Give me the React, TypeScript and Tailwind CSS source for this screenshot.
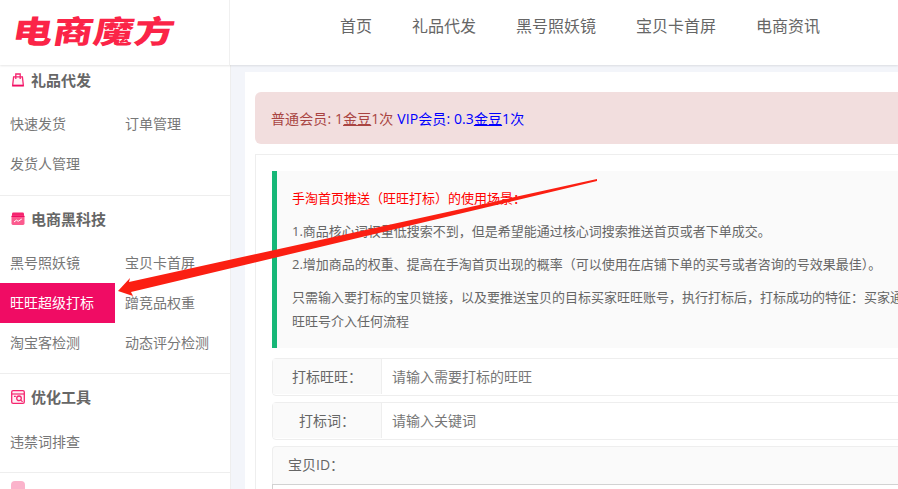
const navItems = ["首页", "礼品代发", "黑号照妖镜", "宝贝卡首屏", "电商资讯"];

const BagIcon = () => (
  <svg width="14" height="14" viewBox="0 0 14 14" fill="none" stroke="#f5256f" strokeWidth="1.3">
    <path d="M2.6 3.9h8.8l1 8.9H1.600z" fill="#fff5f8" />
    <path d="M4.800 6V1h4.400v5" />
    <path d="M1.800 12.400h10.400" stroke="#f00c64" strokeWidth="1.500" />
  </svg>
);

const ShopIcon = () => (
  <svg width="14" height="14" viewBox="0 0 14 14" fill="none">
    <path d="M2.400 0.500h9.200a1.400 1.400 0 0 1 1.400 1.400v3H1v-3a1.400 1.400 0 0 1 1.400-1.400z" fill="#f5256f" />
    <rect x="0.500" y="3.600" width="13" height="9.400" rx="1.400" fill="#fb5b8e" />
    <path d="M0.500 4.400h13" stroke="#f00c64" strokeWidth="1.200" />
    <path d="M3 10l2.400-1.900 1.800 1.200 3.600-2.300" stroke="#fff" strokeWidth="1" />
  </svg>
);

const SearchIcon = () => (
  <svg width="14" height="14" viewBox="0 0 14 14" fill="none" stroke="#f5256f">
    <rect x="0.700" y="0.700" width="12.600" height="12.600" rx="1.400" fill="#fff0f5" strokeWidth="1.300" />
    <path d="M1 4h12" strokeWidth="1.200" />
    <circle cx="8" cy="8.300" r="2.300" strokeWidth="1.300" />
    <path d="M9.800 10.100l1.800 1.800M3 6.400h1.800" strokeWidth="1.200" />
  </svg>
);

const sections = [
  { title: "礼品代发", icon: <BagIcon />, wrap: "pb-[11px]", rows: "mt-[9px]", items: ["快速发货", "订单管理", "发货人管理"] },
  { title: "电商黑科技", icon: <ShopIcon />, wrap: "pt-2 pb-2.5", rows: "mt-[9px]", items: ["黑号照妖镜", "宝贝卡首屏", "旺旺超级打标", "蹭竞品权重", "淘宝客检测", "动态评分检测"] },
  { title: "优化工具", icon: <SearchIcon />, wrap: "pt-2 pb-2.5", rows: "mt-2.5", items: ["违禁词排查"] },
];

const Sidebar = () => (
  <aside className="flex h-full w-[231px] shrink-0 flex-col overflow-hidden border-r border-[#eeeeee] bg-white">
    {sections.map(section => (
      <section key={section.title} className={`shrink-0 border-b border-[#eeeeee] ${section.wrap}`}>
        <h3 className="flex h-[30px] items-center gap-1.5 pl-[11px] text-[15px] font-bold text-[#666666]">
          {section.icon}
          {section.title}
        </h3>
        <div className={`grid grid-cols-[115px_115px] text-[14px] leading-10 text-[#777777] ${section.rows}`}>
          {section.items.map(item => (
            <a
              key={item}
              className={`h-10 whitespace-nowrap pl-2.5 ${item === "旺旺超级打标" ? "bg-[#f00c64] text-white" : ""}`}
            >
              {item}
            </a>
          ))}
        </div>
      </section>
    ))}
    <section className="shrink-0 pt-2 pl-[11px]">
      <div className="h-3.5 w-3.5 rounded-sm bg-[#fbb3cb]" />
    </section>
  </aside>
);

const InputRow = ({ label, placeholder }: { label: string; placeholder: string }) => (
  <div className="flex h-[38px] shrink-0 rounded-sm border border-[#eeeeee] bg-white pb-px text-[14px]">
    <label className="flex w-[109px] shrink-0 items-center justify-center border-r border-[#eeeeee] bg-[#fafafa] text-[#666666]">
      {label}
    </label>
    <div className="flex items-center pl-2.5 text-[#777777]">{placeholder}</div>
  </div>
);

export default function App() {
  return (
    <div className="relative flex h-[489px] w-[898px] flex-col overflow-hidden bg-[#f3f5fa] [font-family:'Open_Sans','Noto_Sans_CJK_SC',sans-serif]">
      <header className="z-10 flex h-[65px] shrink-0 bg-white shadow-[0_1px_2px_rgba(0,0,0,0.1)]">
        <div className="flex w-[230px] shrink-0 items-center overflow-hidden border-r border-[#f0f0f0] pb-[3px] pl-[13px]">
          <span className="origin-left whitespace-nowrap text-[40px] font-black leading-none tracking-[0.5px] text-[#fb2447] [transform:skewX(-10deg)_scaleY(0.78)]">
            电商魔方
          </span>
        </div>
        <nav className="flex items-center gap-10 pb-[14px] pl-[110px] text-base text-[#666666]">
          {navItems.map(item => (
            <a key={item} className="whitespace-nowrap">
              {item}
            </a>
          ))}
        </nav>
      </header>

      <div className="flex min-h-0 flex-1">
        <Sidebar />
        <main className="ml-3.5 mt-[7px] min-w-0 flex-1 overflow-hidden bg-white pl-2.5 pt-5">
          <div className="flex h-[52px] w-[800px] items-center whitespace-pre rounded-l-md bg-[#f2dede] pl-4 text-[14px] tracking-[0.1px] text-[#a94442]">
            普通会员: 1<u>金豆</u>1次{" "}
            <span className="text-[#0000ff]">
              VIP会员: 0.3<u>金豆</u>1次
            </span>
          </div>

          <div className="mt-2.5 w-[800px] border border-[#eeeeee] pl-4 pt-4">
            <blockquote className="h-[177px] overflow-hidden border-l-[5px] border-[#16b777] bg-[#fafafa] pl-[15px] pt-[16px] text-[13px] leading-[23px] text-[#666666]">
              <p className="text-[#ff0000]">手淘首页推送（旺旺打标）的使用场景：</p>
              <p className="mt-2.5 whitespace-nowrap">1.商品核心词权重低搜索不到，但是希望能通过核心词搜索推送首页或者下单成交。</p>
              <p className="mt-2.5 whitespace-nowrap">2.增加商品的权重、提高在手淘首页出现的概率（可以使用在店铺下单的买号或者咨询的号效果最佳）。</p>
              <p className="mt-2.5 whitespace-nowrap">只需输入要打标的宝贝链接，以及要推送宝贝的目标买家旺旺账号，执行打标后，打标成功的特征：买家通过</p>
              <p className="mt-px whitespace-nowrap">旺旺号介入任何流程</p>
            </blockquote>

            <div className="mt-2.5 flex flex-col gap-1.5">
              <InputRow label="打标旺旺：" placeholder="请输入需要打标的旺旺" />
              <InputRow label="打标词：" placeholder="请输入关键词" />
              <div>
                <div className="h-[38px] rounded-t-sm border border-b-0 border-[#eeeeee] bg-[#fafafa] pl-[15px] text-[14px] leading-[36px] text-[#666666]">
                  宝贝ID：
                </div>
                <div className="h-20 border border-[#d2d2d2] bg-white" />
              </div>
            </div>
          </div>
        </main>
      </div>

      {/* red annotation arrow */}
      <svg className="pointer-events-none absolute inset-0 z-20" width="898" height="489" viewBox="0 0 898 489">
        <path d="M597 179L129 282L130 278L118 291L133 296L131 292L597 181Z" fill="#fb1f12" />
      </svg>
    </div>
  );
}
